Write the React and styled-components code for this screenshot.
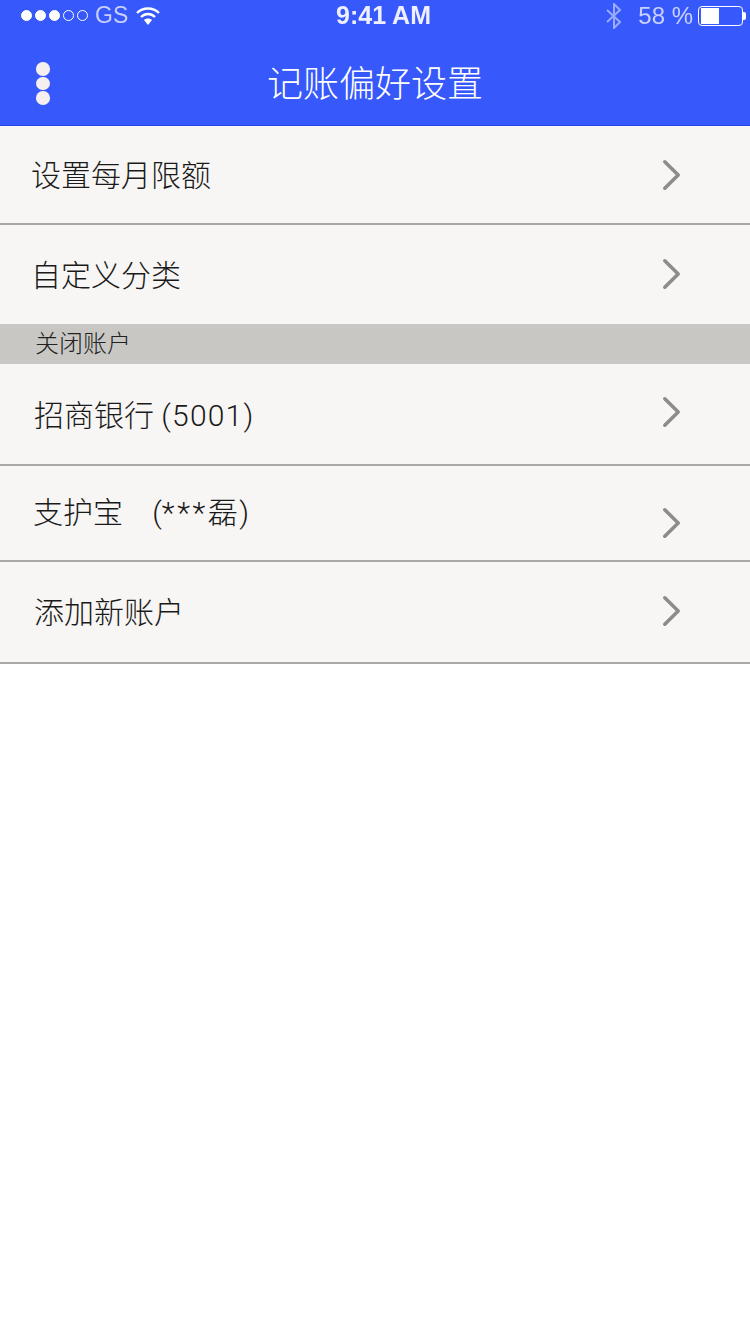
import React from "react";
import styled, { createGlobalStyle } from "styled-components";

const GlobalStyle = createGlobalStyle`
	html, body {
		margin: 0;
		padding: 0;
		background: #fff;
	}
	body {
		font-family: "Roboto", "Noto Sans CJK SC", sans-serif;
	}
`;

//Styles
const Page = styled.div`
	width: 750px;
	height: 1334px;
	background: #fff;
	overflow: hidden;
`;

const Header = styled.header`
	height: 125px;
	background: #3758fb;
	border-bottom: 1px solid #2347e8;
	color: #fff;
`;

const StatusBar = styled.div`
	height: 31px;
	display: grid;
	grid-template-columns: 1fr auto 1fr;
	align-items: center;
	padding: 0 4px 0 21px;
	font-family: "Liberation Sans", sans-serif;
`;

const StatusLeft = styled.div`
	display: flex;
	align-items: center;
`;

const StatusRight = styled.div`
	display: flex;
	align-items: center;
	justify-content: flex-end;
`;

const Signal = styled.span`
	display: block;
	box-sizing: border-box;
	width: 11px;
	height: 11px;
	margin-right: 3px;
	border-radius: 50%;
	border: 1px solid #fff;
	background: ${(p) => (p.$on ? "#fff" : "transparent")};
`;

const Carrier = styled.span`
	font-size: 23px;
	margin: 0 8px 0 4px;
	color: rgba(255, 255, 255, 0.72);
	filter: blur(0.6px);
`;

const Clock = styled.span`
	font-size: 25px;
	font-weight: 700;
	color: #eef0ff;
	filter: blur(0.3px);
`;

const Percent = styled.span`
	font-size: 24px;
	margin: 0 5px 0 15px;
	color: rgba(255, 255, 255, 0.72);
	filter: blur(0.6px);
`;

const Battery = styled.div`
	position: relative;
	box-sizing: border-box;
	width: 45px;
	height: 20px;
	padding: 1px 2px;
	border: 1px solid #fff;
	border-radius: 4px;
	margin-right: 3px;
	&::after {
		content: "";
		position: absolute;
		right: -4px;
		top: 5px;
		width: 3px;
		height: 8px;
		border-radius: 0 2px 2px 0;
		background: #fff;
	}
`;

const BatteryFill = styled.div`
	height: 100%;
	background: #fff;
`;

const NavBar = styled.div`
	position: relative;
	height: 94px;
	display: flex;
	align-items: center;
	justify-content: center;
`;

const Title = styled.h1`
	margin: 0;
	font-size: 36px;
	font-weight: 300;
	line-height: 1;
	position: relative;
	top: 7px;
`;

const MenuButton = styled.div`
	position: absolute;
	left: 36px;
	top: 31px;
	display: flex;
	flex-direction: column;
	gap: 1px;
`;

const MenuDot = styled.span`
	width: 13.6px;
	height: 13.6px;
	border-radius: 50%;
	background: #f5efef;
`;

const Row = styled.div`
	box-sizing: border-box;
	height: ${(p) => p.$height}px;
	display: flex;
	align-items: center;
	justify-content: space-between;
	background: #f7f6f4;
	padding: 0 69px 0 ${(p) => p.$left}px;
	border-bottom: ${(p) => (p.$line ? "2px solid #a8a8a6" : "none")};
`;

const RowLabel = styled.span`
	font-size: 30px;
	font-weight: 300;
	line-height: 1;
	color: #1a1a1a;
	position: relative;
	top: ${(p) => p.$shift || 0}px;
	white-space: pre;
`;

const Wide = styled.span`
	letter-spacing: ${(p) => p.$gap}px;
`;

const Chevron = styled.svg`
	width: 20px;
	height: 32px;
	flex: none;
	position: relative;
	top: ${(p) => p.$shift || 0}px;
`;

const Section = styled.div`
	height: 40px;
	display: flex;
	align-items: center;
	padding-left: 35px;
	background: #c8c7c3;
	font-size: 24px;
	line-height: 1;
	font-weight: 300;
	color: #222;
`;

const rows = [
	{ id: "limit", label: "设置每月限额", height: 99, left: 31, line: true, textShift: 1, arrowShift: 0 },
	{ id: "category", label: "自定义分类", height: 99, left: 31, line: false, textShift: 1, arrowShift: -1 },
	"section",
	{
		id: "bank",
		label: (
			<>
				招商银行 <Wide $gap={1.2}>(5001)</Wide>
			</>
		),
		height: 102,
		left: 34,
		line: true,
		textShift: 2,
		arrowShift: -2,
	},
	{
		id: "alipay",
		label: (
			<>
				{"支护宝    ("}
				<Wide $gap={2.6}>***</Wide>
				<Wide $gap={1.5}>磊</Wide>
				{")"}
			</>
		),
		height: 96,
		left: 33,
		line: true,
		textShift: 0,
		arrowShift: 10,
	},
	{ id: "add", label: "添加新账户", height: 102, left: 34, line: true, textShift: 1, arrowShift: -1 },
];

const ArrowIcon = ({ shift }) => (
	<Chevron $shift={shift} viewBox="0 0 20 32">
		<path
			d="M3.8 2.8 L17.2 16 L3.8 29.2"
			fill="none"
			stroke="#8c8c8c"
			strokeWidth="3.6"
			strokeLinecap="round"
			strokeLinejoin="round"
		/>
	</Chevron>
);

const App = () => {
	return (
		<Page>
			<GlobalStyle />
			<Header>
				<StatusBar>
					<StatusLeft>
						<Signal $on />
						<Signal $on />
						<Signal $on />
						<Signal />
						<Signal />
						<Carrier>GS</Carrier>
						<svg width="24" height="18" viewBox="0 0 24 18">
							<path
								d="M1 6 C7 0 17 0 23 6 M5 10 C9 6 15 6 19 10"
								fill="none"
								stroke="#fff"
								strokeWidth="2.4"
							/>
							<path d="M8 13 C10 11 14 11 16 13 L12 18 Z" fill="#fff" />
						</svg>
					</StatusLeft>
					<Clock>9:41 AM</Clock>
					<StatusRight>
						<svg width="18" height="26" viewBox="0 0 18 26">
							<path
								d="M2 7 L15 19 L9 25 L9 1 L15 7 L2 19"
								fill="none"
								stroke="rgba(255,255,255,0.5)"
								strokeWidth="2"
							/>
						</svg>
						<Percent>58 %</Percent>
						<Battery>
							<BatteryFill style={{ width: "46%" }} />
						</Battery>
					</StatusRight>
				</StatusBar>
				<NavBar>
					<MenuButton>
						<MenuDot />
						<MenuDot />
						<MenuDot />
					</MenuButton>
					<Title>记账偏好设置</Title>
				</NavBar>
			</Header>
			{rows.map((row) =>
				row === "section" ? (
					<Section key="section">关闭账户</Section>
				) : (
					<Row key={row.id} $height={row.height} $left={row.left} $line={row.line}>
						<RowLabel $shift={row.textShift}>{row.label}</RowLabel>
						<ArrowIcon shift={row.arrowShift} />
					</Row>
				)
			)}
		</Page>
	);
};

export default App;
